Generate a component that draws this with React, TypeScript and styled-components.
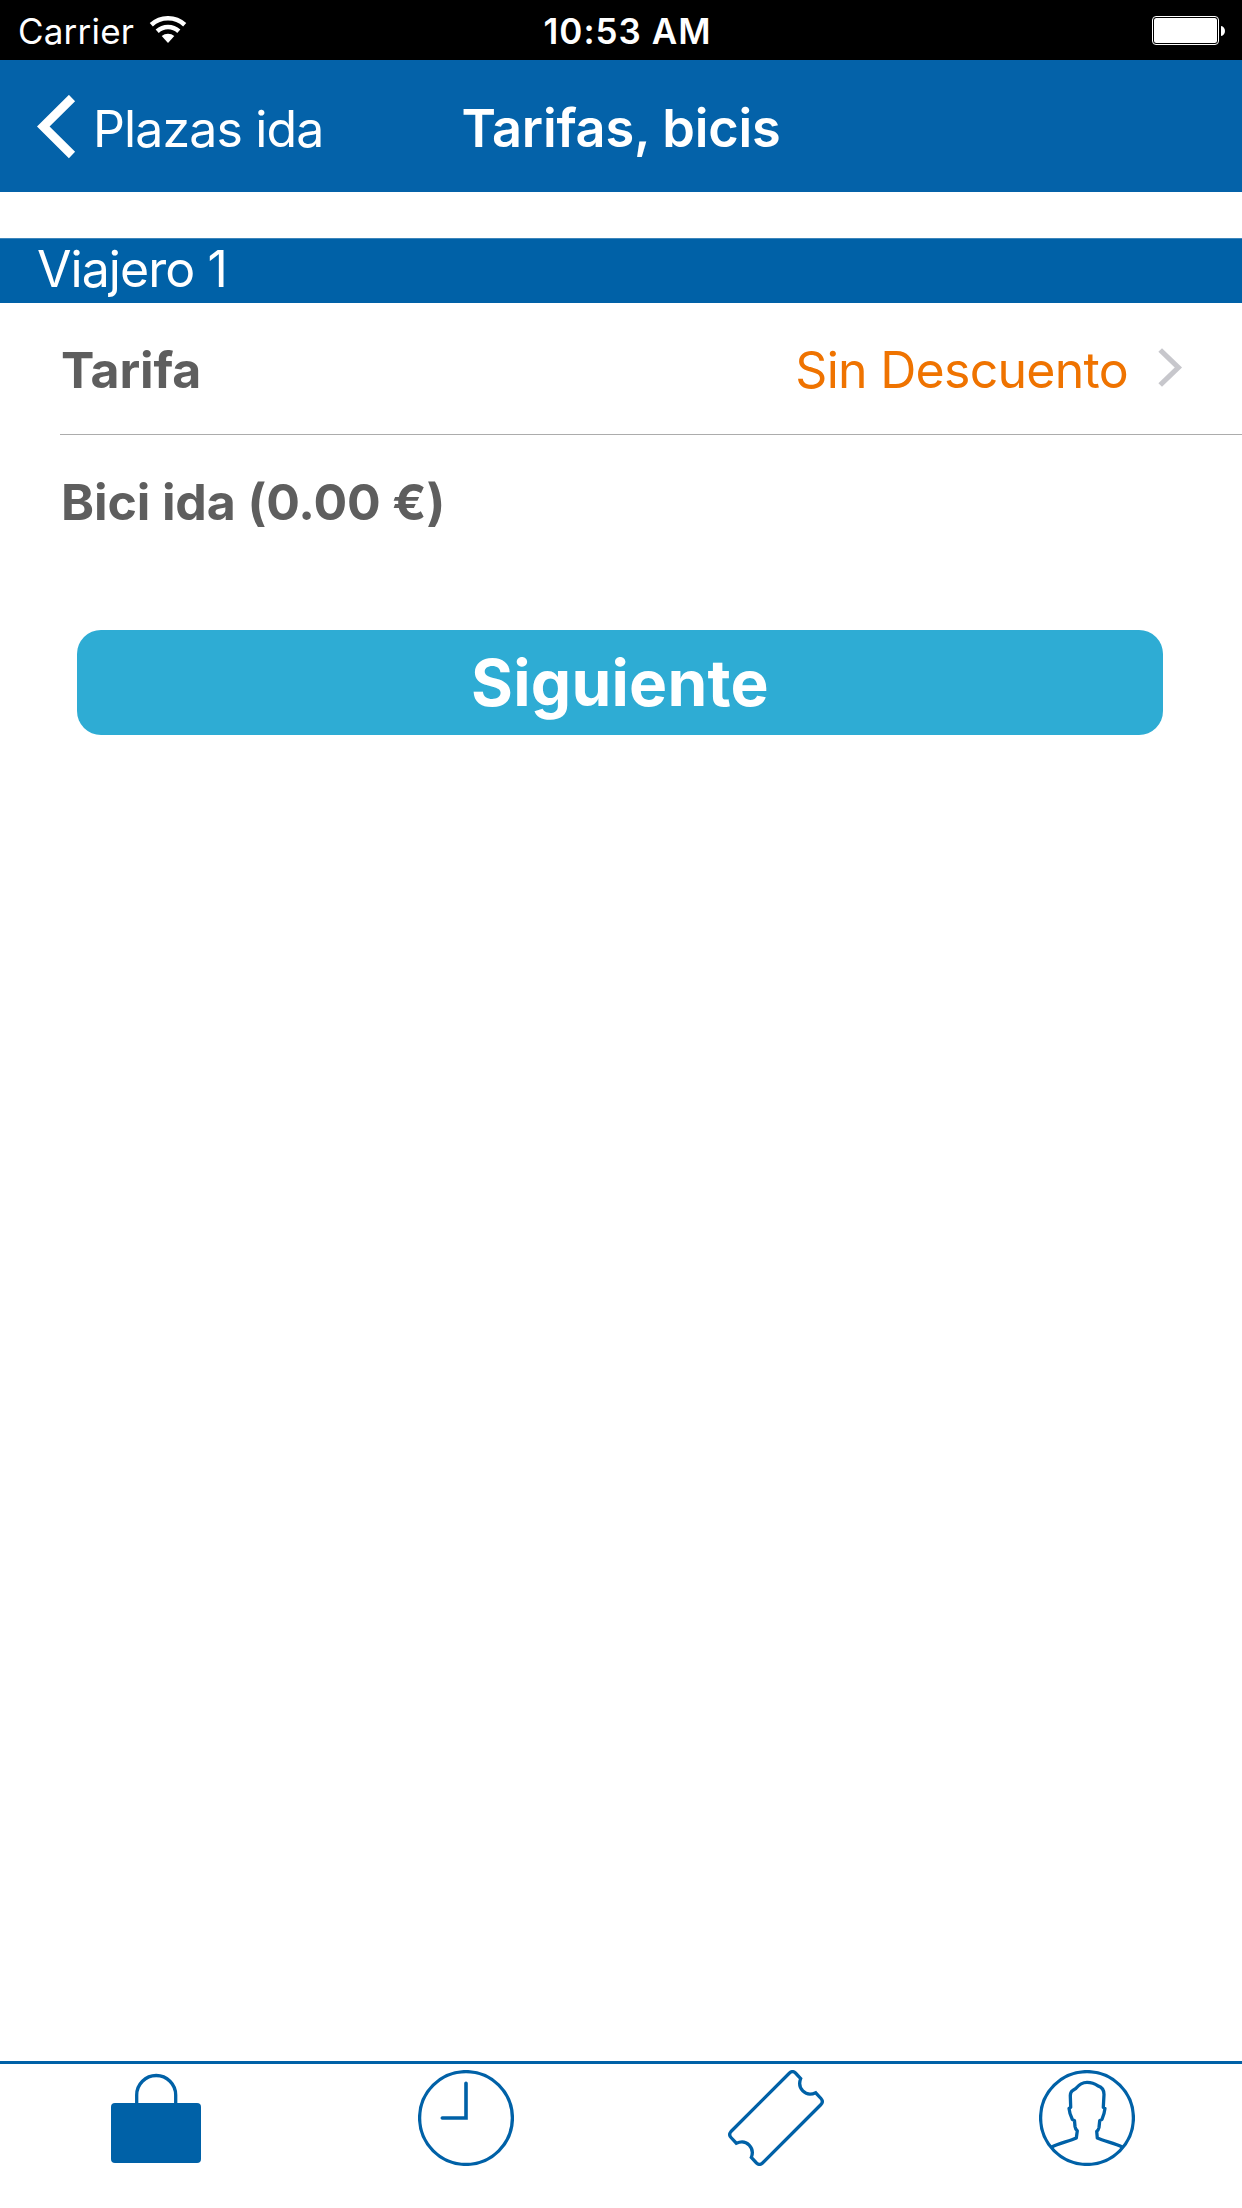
import React from "react";
import styled, { createGlobalStyle } from "styled-components";

const BLUE = "#0061a7";
const GRAY = "#5e5e5e";

const GlobalStyle = createGlobalStyle`
  * { box-sizing: border-box; }
  body { margin: 0; background: #fff; font-family: Inter, "Liberation Sans", sans-serif; }
`;

const Screen = styled.div`
  width: 1242px;
  height: 2208px;
  display: flex;
  flex-direction: column;
  background: #fff;
`;

const Label = styled.span<{ $size: number; $weight?: number; $spacing?: number; $color?: string }>`
  font-size: ${(p) => p.$size}px;
  font-weight: ${(p) => p.$weight ?? 400};
  letter-spacing: ${(p) => p.$spacing ?? 0}px;
  color: ${(p) => p.$color ?? "#fff"};
  line-height: 1.2;
  white-space: nowrap;
`;

const StatusBar = styled.header`
  height: 60px;
  display: grid;
  grid-template-columns: 1fr auto 1fr;
  align-items: center;
  padding: 2px 17px 0 18px;
  background: #000;
`;

const Carrier = styled.div`
  display: flex;
  align-items: center;
  gap: 15px;
`;

const Clock = styled(Label)`
  padding-left: 12px;
`;

const BatteryIcon = styled.svg`
  justify-self: end;
`;

const NavBar = styled.nav`
  height: 132px;
  display: grid;
  grid-template-columns: 1fr auto 1fr;
  align-items: center;
  padding: 2px 37px 0;
  background: #0462a9;
`;

const BackButton = styled.div`
  display: flex;
  align-items: center;
  gap: 17px;
`;

const BackLabel = styled(Label)`
  padding-top: 4px;
`;

const NavTitle = styled(Label)`
  padding-top: 2px;
`;

const SectionHeader = styled.h2`
  height: 65px;
  margin: 46px 0 0;
  padding: 0 37px 5px;
  display: flex;
  align-items: center;
  border-top: 1px solid #3d86bb;
  background: ${BLUE};
`;

const Row = styled.div<{ $divider?: boolean }>`
  height: 132px;
  margin-left: 60px;
  padding: 0 59px 0 1px;
  display: flex;
  align-items: center;
  justify-content: space-between;
  border-bottom: 1px solid ${(p) => (p.$divider ? "#acacac" : "transparent")};
`;

const RowLabel = styled(Label)`
  padding-top: 2px;
`;

const RowValue = styled.div`
  display: flex;
  align-items: center;
  gap: 30px;
`;

const NextButton = styled.button`
  height: 105px;
  margin: 63px 79px 0 77px;
  padding: 1px 0 0;
  border: 0;
  border-radius: 24px;
  background: #2eacd4;
  font-family: inherit;
`;

const TabBar = styled.footer`
  height: 147px;
  margin-top: auto;
  padding-top: 6px;
  display: grid;
  grid-template-columns: 312fr 308fr 312fr 310fr;
  justify-items: center;
  border-top: 3px solid ${BLUE};
`;

const TabIcon = styled.svg`
  width: 96px;
  height: 96px;
  fill: none;
  stroke: ${BLUE};
  stroke-width: 3.3;
`;

export default function App() {
  return (
    <>
      <GlobalStyle />
      <Screen>
        <StatusBar>
          <Carrier>
            <Label $size={35} $spacing={0.2}>Carrier</Label>
            <svg width="38" height="30" viewBox="0 0 38 30" fill="none" stroke="#fff" strokeWidth="4.6">
              <path d="M2.3 8.8A24.7 24.7 0 0 1 35.7 8.8" />
              <path d="M8.2 15.2A16 16 0 0 1 29.8 15.2" />
              <path d="M12.700 20.100A9.300 9.300 0 0 1 25.300 20.100L19 27Z" fill="#fff" stroke="none" />
            </svg>
          </Carrier>
          <Clock $size={35} $weight={600} $spacing={1}>10:53 AM</Clock>
          <BatteryIcon width="73" height="30" viewBox="0 0 73 30">
            <rect x="0.5" y="0.5" width="66" height="28" rx="3.500" fill="none" stroke="#fff" />
            <rect x="2" y="2" width="63" height="25" rx="2.500" fill="#fff" />
            <path d="M69 10C71.500 10.300 73 12.500 73 15S71.500 19.700 69 20Z" fill="#fff" />
          </BatteryIcon>
        </StatusBar>

        <NavBar>
          <BackButton>
            <svg width="39" height="64" viewBox="0 0 39 64" fill="none" stroke="#fff" strokeWidth="8.8">
              <path d="M35 3L6.200 31.500L35 60" />
            </svg>
            <BackLabel $size={50} $spacing={-0.85}>Plazas ida</BackLabel>
          </BackButton>
          <NavTitle $size={52.3} $weight={600} $spacing={-0.21}>Tarifas, bicis</NavTitle>
        </NavBar>

        <SectionHeader>
          <Label $size={50} $spacing={-0.95}>Viajero 1</Label>
        </SectionHeader>
        <Row $divider>
          <RowLabel $size={50} $weight={700} $spacing={-0.15} $color={GRAY}>Tarifa</RowLabel>
          <RowValue>
            <RowLabel $size={50} $spacing={-0.72} $color="#ef7300">Sin Descuento</RowLabel>
            <svg width="25" height="41" viewBox="0 0 25 41" fill="none" stroke="#c7c7cc" strokeWidth="5.2">
              <path d="M2.200 2L20.300 19.500L2.200 37" />
            </svg>
          </RowValue>
        </Row>
        <Row>
          <RowLabel $size={50} $weight={700} $spacing={-0.11} $color={GRAY}>Bici ida (0.00 €)</RowLabel>
        </Row>

        <NextButton>
          <Label $size={64} $weight={700} $spacing={0.22}>Siguiente</Label>
        </NextButton>

        <TabBar>
          <TabIcon viewBox="0 0 96 96">
            <path d="M28.700 34V25a19.500 19.500 0 0 1 39 0V34" />
            <rect x="3" y="33" width="90" height="60" rx="4" fill={BLUE} stroke="none" />
          </TabIcon>
          <TabIcon viewBox="0 0 96 96">
            <circle cx="48" cy="48" r="46.4" />
            <path d="M48 13.300V48H24.300" strokeWidth="3.6" strokeLinecap="round" />
          </TabIcon>
          <TabIcon viewBox="0 0 96 96">
            <path d="M3 61.500L61.500 3Q64.500 0.300 67.500 3L72.700 8.500C69 18 77 27.500 87.700 22.800L93 28.500Q95.700 31.500 93 34.500L34.500 93Q31.500 95.700 28.500 93L23.300 87.500C27 78 19 68.500 8.300 73.200L3 67.500Q0.300 64.500 3 61.500Z" />
          </TabIcon>
          <TabIcon viewBox="0 0 96 96">
            <circle cx="48" cy="48" r="46.4" />
            <path
              strokeLinejoin="round"
              d="M12.300 77.300C20 73 30 71.500 37.300 68L38.300 60.700Q36.300 59 36 56.500L35.500 50.700L33.300 49.300L31 43.500L30 38.300L31.700 37.300L31.300 25.500Q31.500 22 33.500 20.700L37 18.300C40 14.500 43 12.300 48 12.300C53 12.300 56.500 14 59 15.800C63 17 65 20 65 24.500L64.300 37.300L66 38.300L65 43.500L63 49.300L60.700 50.700L60 57.500Q59.500 60 57.700 61.300L58.300 68C66 71.500 76 73 83.700 77.300"
            />
          </TabIcon>
        </TabBar>
      </Screen>
    </>
  );
}
